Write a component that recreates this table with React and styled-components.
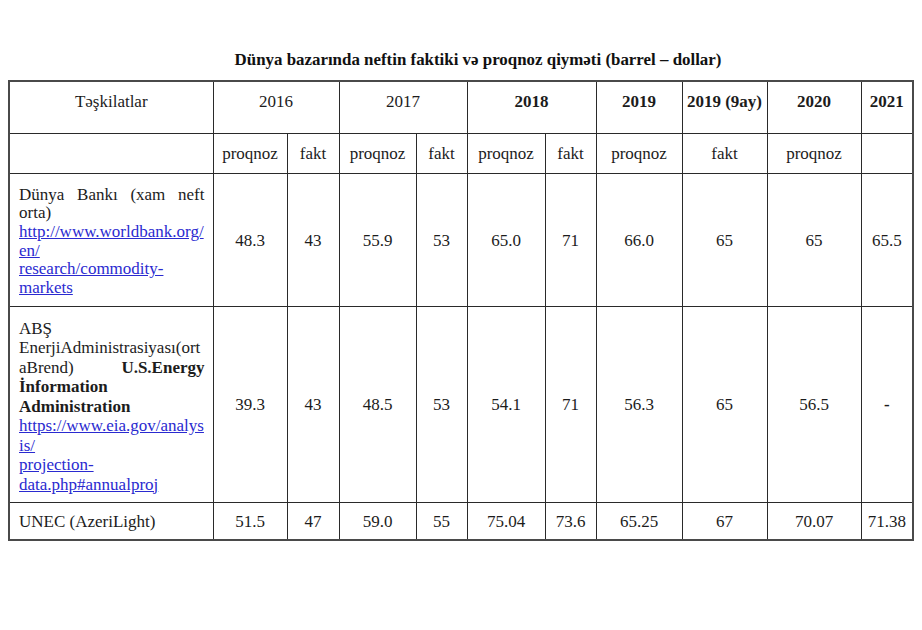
import React from "react";
import styled, { createGlobalStyle } from "styled-components";

const Global = createGlobalStyle`
  html, body { margin: 0; padding: 0; background: #ffffff; }
  body { font-family: "Liberation Serif", "Times New Roman", serif; color: #1c1c1c; }
`;

const Page = styled.div`
  width: 922px;
  height: 630px;
  padding: 50px 8px 0 8px;
  box-sizing: border-box;
  background: #fff;
`;

const Title = styled.h1`
  margin: 0 0 10px 0;
  padding-left: 36px;
  height: 20px;
  line-height: 20px;
  font-size: 16.9px;
  font-weight: bold;
  text-align: center;
  width: 904px;
  box-sizing: border-box;
  color: #111;
`;

const Table = styled.table`
  width: 904px;
  border-collapse: collapse;
  table-layout: fixed;
  border: 2px solid #4a4a4a;
  font-size: 17px;
  line-height: 19.5px;
`;

const Row = styled.tr`
  height: ${(p) => p.$h}px;
`;

const Cell = styled.td`
  border: 1px solid #2a2a2a;
  padding: ${(p) => (p.$top ? "10px 4px 0 4px" : "2px 4px 0 4px")};
  text-align: center;
  vertical-align: ${(p) => (p.$top ? "top" : "middle")};
  font-weight: ${(p) => (p.$bold ? "bold" : "normal")};
  white-space: nowrap;
`;

const NameCell = styled.td`
  border: 1px solid #2a2a2a;
  padding: ${(p) => (p.$middle ? "2px 8px 0 9px" : "12px 8px 0 9px")};
  text-align: left;
  vertical-align: ${(p) => (p.$middle ? "middle" : "top")};
  line-height: ${(p) => p.$lh || 19.5}px;
`;

const Line = styled.div`
  text-align: ${(p) => (p.$justify ? "justify" : "left")};
  text-align-last: ${(p) => (p.$justify ? "justify" : "left")};
  font-weight: ${(p) => (p.$bold ? "bold" : "normal")};
  white-space: ${(p) => (p.$justify ? "normal" : "nowrap")};
`;

const Link = styled.a`
  color: #2a2ad0;
  text-decoration: underline;
  text-underline-offset: 1px;
`;

const Bold = styled.b`
  font-weight: bold;
`;

const cols = [204, 74, 52, 77, 51, 78, 51, 86, 85, 94, 52];

const rowA = ["48.3", "43", "55.9", "53", "65.0", "71", "66.0", "65", "65", "65.5"];
const rowB = ["39.3", "43", "48.5", "53", "54.1", "71", "56.3", "65", "56.5", "-"];
const rowC = ["51.5", "47", "59.0", "55", "75.04", "73.6", "65.25", "67", "70.07", "71.38"];

export default function App() {
  return (
    <>
      <Global />
      <Page>
        <Title>Dünya bazarında neftin faktiki və proqnoz qiyməti (barrel – dollar)</Title>
        <Table>
          <colgroup>
            {cols.map((w, i) => (
              <col key={i} style={{ width: w }} />
            ))}
          </colgroup>
          <tbody>
            <Row $h={52}>
              <Cell $top>Təşkilatlar</Cell>
              <Cell $top colSpan={2}>2016</Cell>
              <Cell $top colSpan={2}>2017</Cell>
              <Cell $top $bold colSpan={2}>2018</Cell>
              <Cell $top $bold>2019</Cell>
              <Cell $top $bold>2019 (9ay)</Cell>
              <Cell $top $bold>2020</Cell>
              <Cell $top $bold>2021</Cell>
            </Row>
            <Row $h={40}>
              <Cell></Cell>
              <Cell>proqnoz</Cell>
              <Cell>fakt</Cell>
              <Cell>proqnoz</Cell>
              <Cell>fakt</Cell>
              <Cell>proqnoz</Cell>
              <Cell>fakt</Cell>
              <Cell>proqnoz</Cell>
              <Cell>fakt</Cell>
              <Cell>proqnoz</Cell>
              <Cell></Cell>
            </Row>
            <Row $h={133}>
              <NameCell $lh={18.7}>
                <Line $justify>Dünya Bankı (xam neft</Line>
                <Line>orta)</Line>
                <Line><Link href="#">http://www.worldbank.org/</Link></Line>
                <Line><Link href="#">en/</Link></Line>
                <Line><Link href="#">research/commodity-</Link></Line>
                <Line><Link href="#">markets</Link></Line>
              </NameCell>
              {rowA.map((v, i) => (
                <Cell key={i}>{v}</Cell>
              ))}
            </Row>
            <Row $h={196}>
              <NameCell>
                <Line>ABŞ</Line>
                <Line>EnerjiAdministrasiyası(ort</Line>
                <Line $justify>aBrend) <Bold>U.S.Energy</Bold></Line>
                <Line $bold>İnformation</Line>
                <Line $bold>Administration</Line>
                <Line><Link href="#">https://www.eia.gov/analys</Link></Line>
                <Line><Link href="#">is/</Link></Line>
                <Line><Link href="#">projection-</Link></Line>
                <Line><Link href="#">data.php#annualproj</Link></Line>
              </NameCell>
              {rowB.map((v, i) => (
                <Cell key={i} $bold={v === "-"}>{v}</Cell>
              ))}
            </Row>
            <Row $h={38}>
              <NameCell $middle>UNEC (AzeriLight)</NameCell>
              {rowC.map((v, i) => (
                <Cell key={i}>{v}</Cell>
              ))}
            </Row>
          </tbody>
        </Table>
      </Page>
    </>
  );
}
